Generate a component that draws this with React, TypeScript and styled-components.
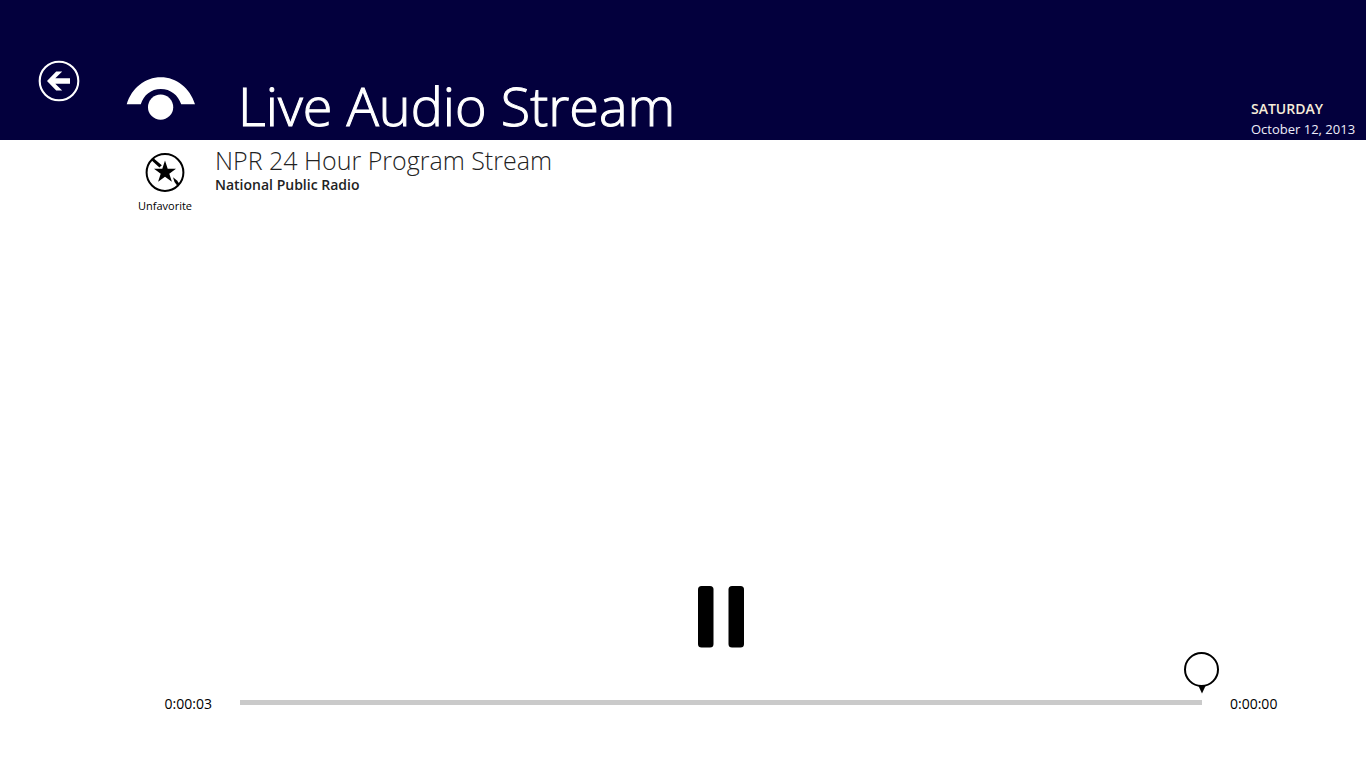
import React, { useState } from "react";
import styled, { createGlobalStyle } from "styled-components";

const GlobalStyle = createGlobalStyle`
  * { box-sizing: border-box; }
  body {
    margin: 0;
    background: #fff;
    color: #000;
    font-family: "Open Sans", "Noto Sans", sans-serif;
  }
`;

const Page = styled.div`
  display: flex;
  flex-direction: column;
  min-height: 100vh;
`;

const Header = styled.header`
  display: flex;
  align-items: flex-end;
  height: 140px;
  padding-right: 8px;
  background: #03003d;
  color: #fff;
`;

const IconButton = styled.button`
  display: block;
  padding: 0;
  border: 0;
  background: none;
  color: inherit;
  font: inherit;
  cursor: pointer;

  svg { display: block; }
`;

const BackButton = styled(IconButton)`
  margin: 0 46px 38px 38px;
`;

const Logo = styled.svg`
  display: block;
  margin: 0 42px 20px 0;
`;

const Title = styled.h1`
  flex: 1;
  margin: 0;
  padding-bottom: 1px;
  font-size: 54px;
  font-weight: 300;
  line-height: 68px;
  white-space: nowrap;
  -webkit-text-stroke: 1px currentColor;
`;

const DateBlock = styled.div`
  width: 107px;
  padding-bottom: 1px;
  line-height: 20px;
  white-space: nowrap;
`;

const Weekday = styled.div`
  color: #f7edda;
  font-size: 14px;
  font-weight: 600;
`;

const Day = styled.div`
  color: #eeeefa;
  font-size: 13px;
`;

const Program = styled.section`
  display: flex;
  align-items: flex-start;
  padding: 8px 16px 0 130px;
`;

const FavoriteButton = styled(IconButton)`
  display: flex;
  flex-direction: column;
  align-items: center;
  width: 70px;
  margin-right: 15px;
  padding-top: 4px;
  gap: 5px;
  font-size: 11px;
  line-height: 16px;
`;

const ProgramTitle = styled.h2`
  margin: 0;
  padding-bottom: 4px;
  color: #222;
  font-size: 25px;
  font-weight: 300;
  line-height: 24px;
`;

const Station = styled.p`
  margin: 0;
  color: #222;
  font-size: 14px;
  font-weight: 600;
  line-height: 18px;
`;

const Player = styled.section`
  display: grid;
  grid-template-columns: 212px 1fr 136px;
  column-gap: 28px;
  align-items: center;
  margin-top: auto;
  padding-bottom: 54px;
`;

const PauseButton = styled(IconButton)`
  grid-column: 2;
  justify-self: center;
  margin-bottom: 44px;
`;

const Time = styled.span<{ $align: "left" | "right" }>`
  grid-column: ${(p) => (p.$align === "right" ? 1 : 3)};
  padding-top: 1px;
  font-size: 14px;
  line-height: 20px;
  text-align: ${(p) => p.$align};
`;

const SeekBar = styled.div`
  position: relative;
  height: 22px;
`;

const Range = styled.input`
  display: block;
  width: 100%;
  height: 20px;
  margin: 0;
  appearance: none;
  background: none;
  cursor: pointer;

  &::-webkit-slider-runnable-track {
    height: 5px;
    background: #cacaca;
  }
  &::-webkit-slider-thumb {
    appearance: none;
    width: 1px;
    height: 5px;
    background: transparent;
  }
`;

const Pin = styled.svg`
  position: absolute;
  bottom: 20px;
  transform: translateX(-50%);
  pointer-events: none;
`;

export default function App() {
  const [position, setPosition] = useState(100);
  const [playing, setPlaying] = useState(true);

  return (
    <Page>
      <GlobalStyle />
      <Header>
        <BackButton aria-label="Back">
          <svg width="42" height="42" viewBox="0 0 42 42">
            <circle cx="21" cy="21" r="19.3" fill="none" stroke="#fff" strokeWidth="2.1" />
            <path d="M9 21 18.2 11.5H24.2L17.3 18.3H32V23.7H17.3L24.2 30.5H18.2Z" fill="#fff" />
          </svg>
        </BackButton>
        <Logo width="70" height="43" viewBox="0 0 70 43" aria-hidden="true">
          <path
            d="M.7 27.2C5.8 11 19 .3 34.8 .3S63.8 11 69 27.2H55.2C52 18 44.6 12 34.8 12S17.8 18 14.8 27.2Z"
            fill="#fff"
          />
          <circle cx="34.6" cy="30.2" r="12.6" fill="#fff" />
        </Logo>
        <Title>Live Audio Stream</Title>
        <DateBlock>
          <Weekday>SATURDAY</Weekday>
          <Day>October 12, 2013</Day>
        </DateBlock>
      </Header>

      <Program>
        <FavoriteButton>
          <svg width="40" height="41" viewBox="0 0 40 41" aria-hidden="true">
            <circle cx="20" cy="20.5" r="18.4" fill="none" stroke="#000" strokeWidth="2" />
            <path d="M20 8.5 22.7 16.7H31L24.3 21.7 26.9 29.7 20 24.8 13.1 29.7 15.7 21.7 9 16.7H17.3Z" />
            <path d="M6.5 8.3 8.5 6.3 16.8 13.3 14.4 15.5Z" />
            <path d="M28 25.3 32 28.5 34.5 32 32.5 34 29.5 30Z" />
          </svg>
          Unfavorite
        </FavoriteButton>
        <div>
          <ProgramTitle>NPR 24 Hour Program Stream</ProgramTitle>
          <Station>National Public Radio</Station>
        </div>
      </Program>

      <Player>
        <PauseButton aria-label={playing ? "Pause" : "Play"} onClick={() => setPlaying(!playing)}>
          <svg width="46" height="62" viewBox="0 0 46 62">
            {playing ? (
              <>
                <rect width="15.5" height="61.5" rx="3.5" />
                <rect x="30.5" width="15.5" height="61.5" rx="3.5" />
              </>
            ) : (
              <path d="M2 0 46 31 2 62Z" />
            )}
          </svg>
        </PauseButton>
        <Time $align="right">0:00:03</Time>
        <SeekBar>
          <Range
            type="range"
            aria-label="Position"
            value={position}
            onChange={(e) => setPosition(Number(e.target.value))}
          />
          <Pin width="36" height="42" viewBox="0 0 36 42" aria-hidden="true" style={{ left: `${position}%` }}>
            <path d="M14 33H22L18 41.5Z" />
            <circle cx="17.5" cy="17.5" r="16.5" fill="#fff" stroke="#000" strokeWidth="2" />
          </Pin>
        </SeekBar>
        <Time $align="left">0:00:00</Time>
      </Player>
    </Page>
  );
}
